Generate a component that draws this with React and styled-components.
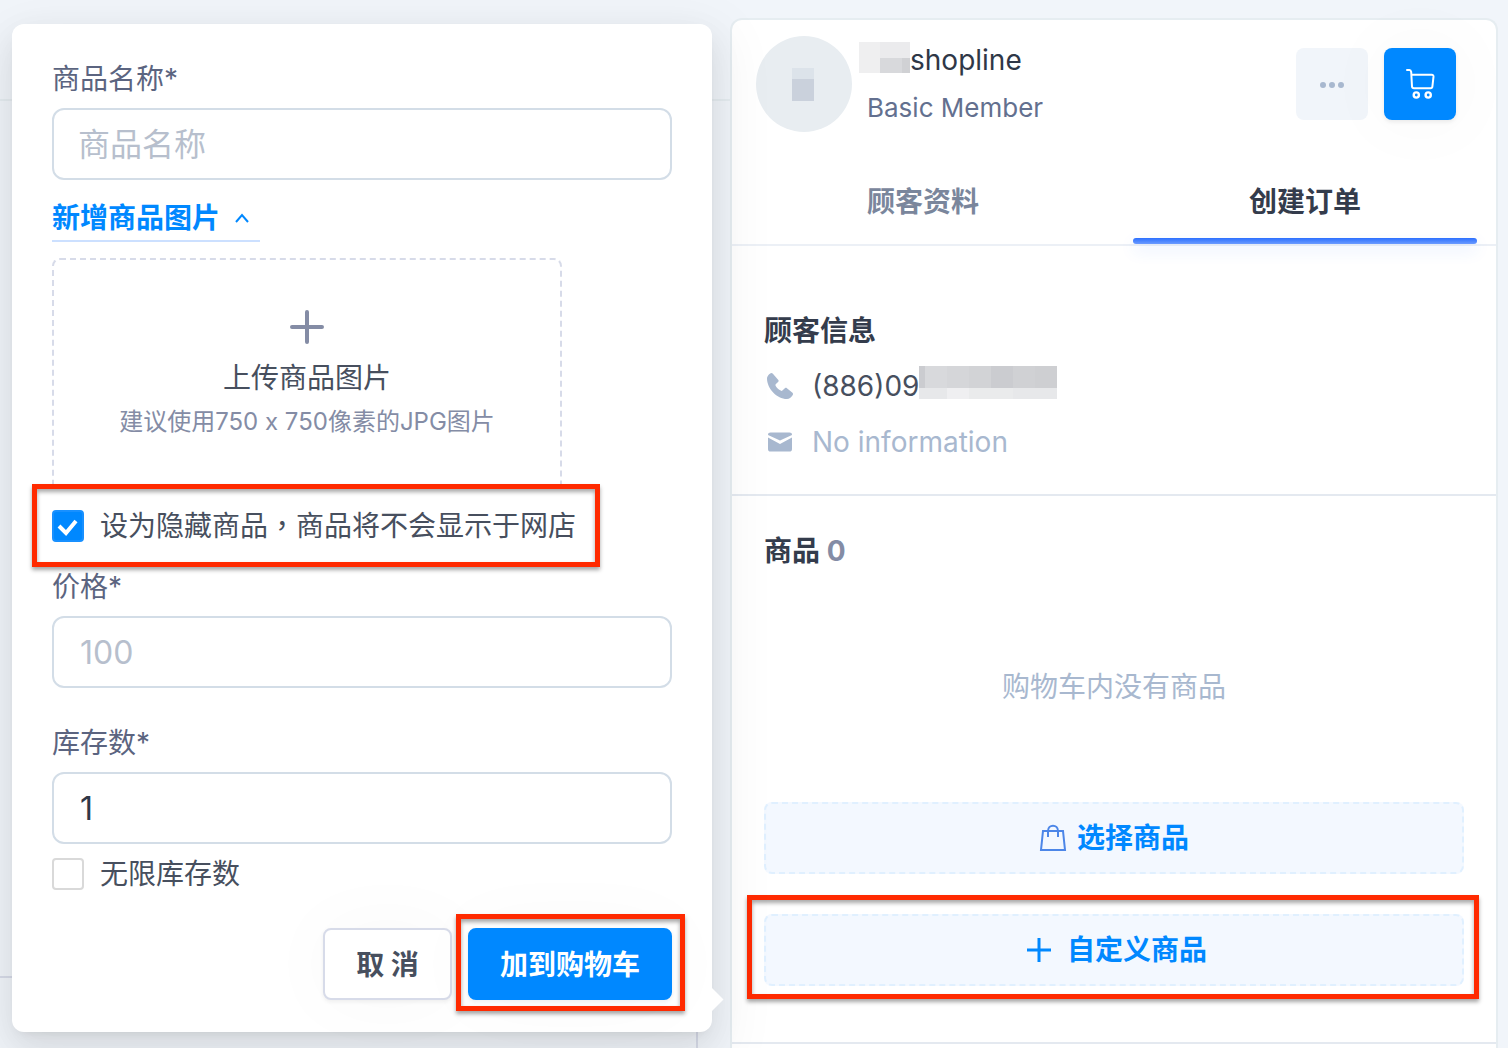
import { useState } from "react";
import styled, { createGlobalStyle, css } from "styled-components";

const GlobalStyle = createGlobalStyle`
  * {
    box-sizing: border-box;
  }

  body {
    margin: 0;
    background-color: #f1f5fa;
    color: #474f5e;
    font-family: Inter, "Noto Sans CJK SC", sans-serif;
    font-size: 28px;
    line-height: 40px;
  }

  button,
  input {
    font: inherit;
  }

  h2,
  p,
  ul {
    margin: 0;
    padding: 0;
  }
`;

const Page = styled.main`
  display: grid;
  grid-template-columns: 730fr 768fr;
  min-height: 100vh;
  padding-right: 10px;
  overflow: hidden;
`;

const ChatColumn = styled.section`
  position: relative;
  z-index: 1;
  padding: 24px 18px 16px 12px;
`;

/* conversation window that sits behind the popover */
const ChatBackdrop = styled.div`
  position: absolute;
  inset: 0;
  display: flex;
  flex-direction: column;
`;

const ChatHeader = styled.div`
  height: 101px;
  border-bottom: 2px solid #e6edf1;
`;

const ChatBody = styled.div`
  flex: 1;
`;

const Composer = styled.div`
  height: 72px;
  margin-right: 32px;
  border-top: 2px solid #d7dbe9;
  border-right: 2px solid #d7dbe9;
`;

const Popover = styled.form`
  position: relative;
  display: flex;
  flex-direction: column;
  padding: 35px 40px 32px;
  background-color: #fff;
  border-radius: 12px;
  box-shadow: 0 6px 12px -8px rgba(0, 0, 0, 0.12),
    0 12px 32px rgba(0, 0, 0, 0.08), 0 18px 56px 16px rgba(0, 0, 0, 0.05);

  &::after {
    content: "";
    position: absolute;
    right: -8px;
    bottom: 24px;
    width: 17px;
    height: 17px;
    background-color: #fff;
    transform: rotate(45deg);
  }
`;

const Field = styled.div`
  display: flex;
  flex-direction: column;
  gap: 9px;
  margin-top: ${(props) => props.$space || 0}px;
`;

const Label = styled.label`
  color: #5b6480;
`;

const TextInput = styled.input`
  width: 100%;
  height: 72px;
  padding: 0 ${(props) => (props.$numeric ? 26 : 24)}px;
  border: 2px solid #d3dde7;
  border-radius: 12px;
  background-color: #fff;
  color: #2f3747;
  font-size: 32px;
  outline: none;

  &::placeholder {
    color: #b7bfcd;
    opacity: 1;
  }
`;

const ToggleLink = styled.button`
  display: flex;
  align-items: center;
  align-self: flex-start;
  gap: 14px;
  margin-top: 18px;
  padding: 0 10px 2px 0;
  border: none;
  border-bottom: 2px solid #cce0ff;
  background: none;
  color: #0088ff;
  font-weight: 700;
`;

const UploadBox = styled.button`
  display: flex;
  flex-direction: column;
  align-items: center;
  width: 510px;
  max-width: 100%;
  height: 226px;
  margin-top: 16px;
  padding: 48px 0 0;
  border: 2px dashed #d7dbe9;
  border-bottom: none;
  border-radius: 8px 8px 0 0;
  background: none;
  color: #474f5e;
`;

const UploadTitle = styled.span`
  margin-top: 12px;
`;

const UploadHint = styled.span`
  margin-top: 4px;
  color: #848ca5;
  font-size: 24px;
`;

const highlight = css`
  position: relative;

  &::after {
    content: "";
    position: absolute;
    border: 5px solid #ff2a00;
    box-shadow: 0 3px 4px rgba(0, 0, 0, 0.35),
      inset 0 3px 4px rgba(0, 0, 0, 0.35);
    pointer-events: none;
  }
`;

const HiddenHighlight = styled.div`
  ${highlight}
  align-self: flex-start;
  margin-top: 22px;

  &::after {
    inset: -22px -24px -21px -20px;
  }
`;

const AddHighlight = styled.div`
  ${highlight}

  &::after {
    inset: -14px -13px -11px -12px;
  }
`;

const CustomHighlight = styled.div`
  ${highlight}
  margin-top: 40px;

  &::after {
    inset: -19px -15px -13px -17px;
  }
`;

const CheckLabel = styled.label`
  display: flex;
  align-items: center;
  gap: 16px;
  font-family: Inter, "Noto Sans CJK TC", sans-serif;
  white-space: nowrap;
`;

const Checkbox = styled.input`
  appearance: none;
  width: 32px;
  height: 32px;
  margin: 0;
  border: 2px solid #d9d9d9;
  border-radius: 4px;
  background-color: #fff;

  &:checked {
    border-color: #1890ff;
    background: #0088ff
      url("data:image/svg+xml,%3Csvg xmlns='http://www.w3.org/2000/svg' viewBox='0 0 28 28'%3E%3Cpath d='M5 14l7 7L22 9' fill='none' stroke='white' stroke-width='4'/%3E%3C/svg%3E")
      center / 28px no-repeat;
  }
`;

const UnlimitedRow = styled.div`
  align-self: flex-start;
  margin-top: 10px;
`;

const Actions = styled.div`
  display: flex;
  justify-content: flex-end;
  gap: 16px;
  margin-top: 34px;
`;

const ActionButton = styled.button`
  min-width: 129px;
  height: 72px;
  padding: 2px 30px 0;
  border: 2px solid ${(props) => (props.$primary ? "#0088ff" : "#d7dbe9")};
  border-radius: 8px;
  background-color: ${(props) => (props.$primary ? "#0088ff" : "#fff")};
  color: ${(props) => (props.$primary ? "#fff" : "#474f5e")};
  font-weight: 700;
  box-shadow: 0 2px 4px rgba(0, 0, 0, 0.06), 0 0 80px rgba(0, 0, 0, 0.03);
`;

const Panel = styled.aside`
  display: flex;
  flex-direction: column;
  min-width: 0;
  margin-top: 18px;
  border: 2px solid #e6edf1;
  border-bottom: none;
  border-radius: 12px 12px 0 0;
  background-color: #fff;
`;

const Profile = styled.header`
  display: flex;
  align-items: flex-start;
  padding: 16px 40px 0 24px;
`;

const Avatar = styled.div`
  display: flex;
  align-items: center;
  justify-content: center;
  width: 96px;
  height: 96px;
  border-radius: 50%;
  background-color: #e8edf1;
`;

const ProfileText = styled.div`
  flex: 1;
  margin-left: 7px;
`;

const NameRow = styled.p`
  display: flex;
  align-items: flex-start;
  height: 48px;
  padding-top: 6px;
  color: #2f3747;
  line-height: 36px;
`;

const Member = styled.p`
  margin-left: 8px;
  padding-top: 4px;
  color: #63708f;
  font-size: 26px;
`;

const IconButtons = styled.div`
  display: flex;
  gap: 16px;
  margin-top: 12px;
`;

const IconButton = styled.button`
  display: flex;
  align-items: center;
  justify-content: center;
  width: 72px;
  height: 72px;
  padding: 0;
  border: none;
  border-radius: 8px;
  background-color: ${(props) => (props.$primary ? "#0088ff" : "#f1f5fa")};
  box-shadow: ${(props) =>
    props.$primary
      ? "0 2px 4px rgba(0, 0, 0, 0.08), 0 0 80px rgba(0, 0, 0, 0.04)"
      : "none"};
`;

const Tabs = styled.nav`
  display: grid;
  grid-template-columns: 1fr 1fr;
  height: 94px;
  margin-top: 20px;
  border-bottom: 2px solid #ecf0f6;
`;

const Tab = styled.button`
  position: relative;
  padding: 8px 0 0;
  border: none;
  background: none;
  color: ${(props) => (props.$active ? "#343c4c" : "#7a869c")};
  font-weight: 700;

  &::after {
    content: "";
    position: absolute;
    right: 19px;
    bottom: 0;
    left: 19px;
    display: ${(props) => (props.$active ? "block" : "none")};
    height: 6px;
    border-radius: 3px;
    background: linear-gradient(#2b6fff, #6b9bff);
    box-shadow: 0 6px 16px rgba(43, 111, 255, 0.14);
  }
`;

const Section = styled.section`
  padding: ${(props) => props.$top}px 32px ${(props) => props.$bottom}px;
  border-bottom: 2px solid #e4e9f0;
`;

const Heading = styled.h2`
  color: #343c4c;
  font-size: 28px;
  line-height: 40px;

  span {
    color: #848ca5;
  }
`;

const ContactList = styled.ul`
  display: flex;
  flex-direction: column;
  gap: 16px;
  margin-top: 15px;
  list-style: none;
`;

const Contact = styled.li`
  display: flex;
  align-items: center;
  gap: 16px;
  height: 40px;
  color: ${(props) => (props.$muted ? "#a8b8cf" : "#474f5e")};
`;

const PhoneNumber = styled.span`
  display: flex;
  align-items: flex-start;
`;

const Empty = styled.p`
  margin: 96px 0 95px;
  color: #a8b8cf;
  text-align: center;
`;

const DashedButton = styled.button`
  display: flex;
  align-items: center;
  justify-content: center;
  gap: 10px;
  width: 100%;
  height: 72px;
  border: 2px dashed #e0f0ff;
  border-radius: 8px;
  background-color: #f3f8ff;
  color: #0088ff;
  font-weight: 700;
`;

function Chevron() {
  return (
    <svg width="16" height="12" viewBox="0 0 16 12" fill="none">
      <path d="M2 10l6-7 6 7" stroke="#0088ff" strokeWidth="2" />
    </svg>
  );
}

function UploadPlus() {
  return (
    <svg width="36" height="38" viewBox="0 0 36 38">
      <path
        d="M18 4v30M3 19h30"
        stroke="#848ca5"
        strokeWidth="4"
        strokeLinecap="round"
      />
    </svg>
  );
}

function AvatarMosaic() {
  return (
    <svg width="24" height="34" viewBox="0 0 24 34">
      <path d="M0 1h22v11H0z" fill="#dce3ea" />
      <path d="M0 12h22v22H0z" fill="#cad1dc" />
    </svg>
  );
}

function NameMosaic() {
  return (
    <svg width="51" height="31" viewBox="0 0 51 31">
      <path d="M0 0h21v31H0z" fill="#efeff0" />
      <path d="M21 0h30v16H21z" fill="#ebebed" />
      <path d="M21 16h22v15H21z" fill="#d8d9dc" />
      <path d="M43 16h8v15h-8z" fill="#d0d1d4" />
    </svg>
  );
}

function PhoneMosaic() {
  return (
    <svg width="138" height="33" viewBox="0 0 138 33">
      <path d="M0 0h6v22H0zM72 0h22v22H72z" fill="#cbccd0" />
      <path d="M6 0h22v22H6z" fill="#d8d9dc" />
      <path d="M28 0h22v22H28z" fill="#d5d6d9" />
      <path d="M50 0h22v22H50z" fill="#d2d3d6" />
      <path d="M94 0h22v22H94z" fill="#d0d1d4" />
      <path d="M116 0h22v22h-22z" fill="#cecfd2" />
      <path d="M0 22h28v11H0zM94 22h44v11H94z" fill="#e7e8ea" />
      <path d="M28 22h22v11H28z" fill="#efeff1" />
      <path d="M50 22h44v11H50z" fill="#eaebec" />
    </svg>
  );
}

function Dots() {
  return (
    <svg width="26" height="8" viewBox="0 0 26 8" fill="#a8b8cf">
      <circle cx="4" cy="5" r="3" />
      <circle cx="13" cy="5" r="3" />
      <circle cx="22" cy="5" r="3" />
    </svg>
  );
}

function Cart() {
  return (
    <svg
      width="32"
      height="32"
      viewBox="0 0 32 32"
      fill="none"
      stroke="#fff"
      strokeWidth="2"
      strokeLinecap="round"
      strokeLinejoin="round"
    >
      <path d="M3 2h2.500c1 0 1.500 1 1.700 2L8 18.500c.1 1.200.8 1.700 2 1.700h16.500c1.200 0 1.800-.7 1.900-1.700L29.500 8.700c.1-1.200-.5-1.900-1.700-1.900H8" />
      <circle cx="12.300" cy="27" r="2.600" strokeWidth="2.400" />
      <circle cx="24.200" cy="27" r="2.600" strokeWidth="2.400" />
    </svg>
  );
}

function Phone() {
  return (
    <svg width="32" height="32" viewBox="0 0 32 32" fill="#a8b8cf">
      <path d="M3 8.500c0-2 2.500-5.200 4.400-5.500.6 0 1 .2 1.500.7l5.400 6.300c.5.600.4 1.200 0 1.700l-2.600 2.600c-.4.500-.4 1 0 1.600 1.300 2 3 3.500 5 4.700.6.400 1.200.4 1.700 0l2.700-2.500c.6-.5 1.200-.4 1.800.1l5.600 4.600c.6.600.7 1.200.4 1.900-1 2.200-3.600 4.300-6 4.300C13 29 3 18.500 3 8.500z" />
    </svg>
  );
}

function Mail() {
  return (
    <svg width="32" height="32" viewBox="0 0 32 32" fill="#a8b8cf">
      <path d="M4 9c0-1.800 1-2.500 2.500-2.500h19C27 6.500 28 7.200 28 9l-12 5.500z" />
      <path d="M4 11.500l12 6.500 12-6.500V23c0 1.800-1 2.600-2.500 2.600h-19C5 25.600 4 24.800 4 23z" />
    </svg>
  );
}

function Bag() {
  return (
    <svg
      width="28"
      height="30"
      viewBox="0 0 28 30"
      fill="none"
      stroke="#4c86e8"
      strokeWidth="2"
    >
      <path d="M4 8h20l2 19H2z" />
      <path d="M9 14V8c0-7 10-7 10 0v6" />
    </svg>
  );
}

function BluePlus() {
  return (
    <svg width="36" height="26" viewBox="0 0 36 26">
      <path d="M18 1v24M6 13h24" stroke="#0088ff" strokeWidth="3" />
    </svg>
  );
}

function ProductForm() {
  const [hidden, setHidden] = useState(true);
  const [unlimited, setUnlimited] = useState(false);

  return (
    <Popover onSubmit={(e) => e.preventDefault()}>
      <Field>
        <Label htmlFor="name">商品名称*</Label>
        <TextInput id="name" placeholder="商品名称" />
      </Field>

      <ToggleLink type="button">
        新增商品图片
        <Chevron />
      </ToggleLink>
      <UploadBox type="button">
        <UploadPlus />
        <UploadTitle>上传商品图片</UploadTitle>
        <UploadHint>建议使用750 x 750像素的JPG图片</UploadHint>
      </UploadBox>

      <HiddenHighlight>
        <CheckLabel>
          <Checkbox
            type="checkbox"
            checked={hidden}
            onChange={(e) => setHidden(e.target.checked)}
          />
          设为隐藏商品，商品将不会显示于网店
        </CheckLabel>
      </HiddenHighlight>

      <Field $space={21}>
        <Label htmlFor="price">价格*</Label>
        <TextInput id="price" $numeric placeholder="100" />
      </Field>
      <Field $space={35}>
        <Label htmlFor="stock">库存数*</Label>
        <TextInput id="stock" $numeric defaultValue="1" />
      </Field>
      <UnlimitedRow>
        <CheckLabel>
          <Checkbox
            type="checkbox"
            checked={unlimited}
            onChange={(e) => setUnlimited(e.target.checked)}
          />
          无限库存数
        </CheckLabel>
      </UnlimitedRow>

      <Actions>
        <ActionButton type="button">取 消</ActionButton>
        <AddHighlight>
          <ActionButton $primary>加到购物车</ActionButton>
        </AddHighlight>
      </Actions>
    </Popover>
  );
}

function CustomerPanel() {
  return (
    <Panel>
      <Profile>
        <Avatar>
          <AvatarMosaic />
        </Avatar>
        <ProfileText>
          <NameRow>
            <NameMosaic />
            shopline
          </NameRow>
          <Member>Basic Member</Member>
        </ProfileText>
        <IconButtons>
          <IconButton aria-label="更多">
            <Dots />
          </IconButton>
          <IconButton $primary aria-label="购物车">
            <Cart />
          </IconButton>
        </IconButtons>
      </Profile>

      <Tabs>
        <Tab>顾客资料</Tab>
        <Tab $active>创建订单</Tab>
      </Tabs>

      <Section $top={65} $bottom={32}>
        <Heading>顾客信息</Heading>
        <ContactList>
          <Contact>
            <Phone />
            <PhoneNumber>
              (886)09
              <PhoneMosaic />
            </PhoneNumber>
          </Contact>
          <Contact $muted>
            <Mail />
            No information
          </Contact>
        </ContactList>
      </Section>

      <Section $top={35} $bottom={56}>
        <Heading>
          商品 <span>0</span>
        </Heading>
        <Empty>购物车内没有商品</Empty>
        <DashedButton>
          <Bag />
          选择商品
        </DashedButton>
        <CustomHighlight>
          <DashedButton>
            <BluePlus />
            自定义商品
          </DashedButton>
        </CustomHighlight>
      </Section>
    </Panel>
  );
}

function App() {
  return (
    <>
      <GlobalStyle />
      <Page>
        <ChatColumn>
          <ChatBackdrop>
            <ChatHeader />
            <ChatBody />
            <Composer />
          </ChatBackdrop>
          <ProductForm />
        </ChatColumn>
        <CustomerPanel />
      </Page>
    </>
  );
}

export default App;
